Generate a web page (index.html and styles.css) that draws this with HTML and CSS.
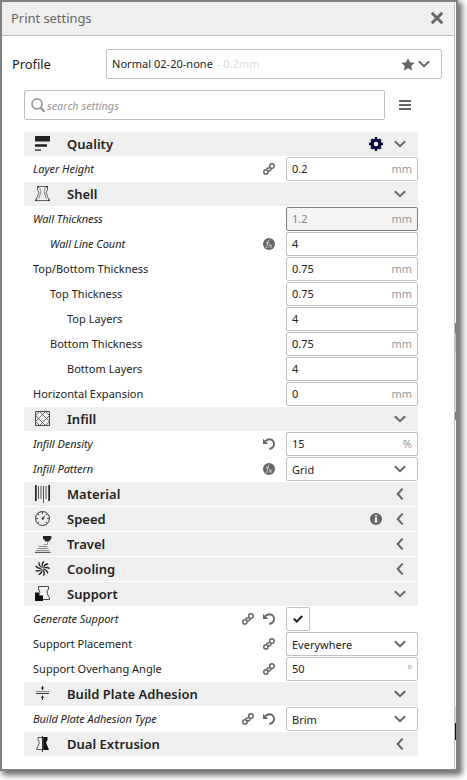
FILE: index.html
```html
<!DOCTYPE html>
<html lang="en">
<head>
<meta charset="utf-8">
<title>Print settings</title>
<link rel="stylesheet" href="styles.css">
</head>
<body>
<svg class="defs" aria-hidden="true">
  <symbol id="down" viewBox="0 0 12 8"><path d="M.8 1.200 6 6.200 11.200 1.200" fill="none" stroke="#666" stroke-width="2"/></symbol>
  <symbol id="left" viewBox="0 0 8 12"><path d="M6.600 .600 1.700 6 6.600 11.400" fill="none" stroke="#666" stroke-width="2"/></symbol>
  <symbol id="link" viewBox="0 0 12 12"><g fill="none" stroke="#666" stroke-width="1.500"><circle cx="2.900" cy="8.900" r="2.100"/><circle cx="8.900" cy="3.100" r="2.300"/><path d="M3.700 6.400C4 4.900 5.300 4.600 6.700 5.300M5.200 7.400C6.500 8.600 8.200 7.600 8 5.600"/></g></symbol>
  <symbol id="undo" viewBox="0 0 12 12"><path d="M2.600 3.200C4.600 .700 8.700 .400 10.400 3.400 12 6.600 10.300 10.600 6.300 11" fill="none" stroke="#666" stroke-width="1.900"/><path d="M0 .800V6H5.200Z" fill="#666"/></symbol>
  <symbol id="fx" viewBox="0 0 12 12"><circle cx="6" cy="6" r="6" fill="#666"/><path d="M6.600 2.200C5.300 1.800 4.900 3 4.700 4.300L4 8.500C3.800 9.700 3.300 10 2.500 9.700M3 4.700H6.200M6.300 6.200 8.700 9.700M9.200 6.200 5.900 9.700" fill="none" stroke="#ddd" stroke-width=".9"/></symbol>
</svg>

<main class="window">
  <header class="titlebar">
    <h1>Print settings</h1>
    <svg class="close" viewBox="0 0 12 12"><path d="M1.700 1.700 10.300 10.300M10.300 1.700 1.700 10.300" stroke="#666" stroke-width="3" stroke-linecap="round"/></svg>
  </header>

  <div class="profile">
    <span class="profile-label">Profile</span>
    <div class="profile-box">
      <span class="profile-name">Normal 02-20-none</span><span class="profile-detail">- 0.2mm</span>
      <svg class="star" viewBox="0 0 14 13"><path d="M7 0 9 4.300 13.600 4.800 10.200 8 11.200 12.700 7 10.300 2.800 12.700 3.800 8 .4 4.800 5 4.300Z" fill="#666"/></svg>
      <svg class="down"><use href="#down"/></svg>
    </div>
  </div>

  <div class="search-row">
    <div class="search">
      <svg viewBox="0 0 15 15"><circle cx="6" cy="5.900" r="5" fill="none" stroke="#999" stroke-width="1.800"/><path d="M9.600 9.600 13.600 13.600" stroke="#999" stroke-width="2.200"/></svg>
      <span>search settings</span>
    </div>
    <svg class="menu" viewBox="0 0 12 10"><path d="M0 1H12M0 5H12M0 9H12" stroke="#666" stroke-width="2"/></svg>
  </div>

  <div class="settings">
    <div class="category">
      <svg class="cat-icon" viewBox="0 0 16 16"><path d="M0 0H15V5.600H0ZM0 8.300H12V10.700H0ZM0 13.500H6V14.800H0Z" fill="#222"/></svg>
      <h2>Quality</h2>
      <svg class="badge gear" viewBox="0 0 14 14"><path d="M5.800 0H8.200V2H5.800ZM5.800 12H8.200V14H5.800ZM0 5.800H2V8.200H0ZM12 5.800H14V8.200H12ZM1.400 3.100 3.100 1.400 4.600 2.900 2.900 4.600ZM9.400 2.900 10.900 1.400 12.600 3.100 11.100 4.600ZM1.400 10.900 2.900 9.400 4.600 11.100 3.100 12.600ZM9.400 11.100 11.100 9.400 12.600 10.900 10.900 12.600Z" fill="#08083f"/><circle cx="7" cy="7" r="3.900" fill="none" stroke="#08083f" stroke-width="3.200"/></svg>
      <svg class="down"><use href="#down"/></svg>
    </div>
    <div class="setting">
      <span class="label changed">Layer Height</span>
      <svg class="mark"><use href="#link"/></svg>
      <div class="field"><span>0.2</span><span class="unit">mm</span></div>
    </div>

    <div class="category">
      <svg class="cat-icon" viewBox="0 0 16 16"><g fill="none" stroke="#444" stroke-width=".8"><path d="M2.500.5H12.500M.5 14.500H14.500M2.500 1V4L4 6.500 1 14M12.500 1V4L11 6.500 14 14"/><path d="M5 1.500V3.500L6 6 3.500 13M10 1.500V3.500L9 6 11.500 13" stroke-width=".6"/></g><path d="M2 0H4V1.500H2ZM11 0H13V1.500H11ZM0 13.500H2V15H0ZM13 13.500H15V15H13Z" fill="#333"/></svg>
      <h2>Shell</h2>
      <svg class="down"><use href="#down"/></svg>
    </div>
    <div class="setting">
      <span class="label changed">Wall Thickness</span>
      <div class="field disabled"><span>1.2</span><span class="unit">mm</span></div>
    </div>
    <div class="setting">
      <span class="label changed level-1">Wall Line Count</span>
      <svg class="mark"><use href="#fx"/></svg>
      <div class="field"><span>4</span></div>
    </div>
    <div class="setting">
      <span class="label">Top/Bottom Thickness</span>
      <div class="field"><span>0.75</span><span class="unit">mm</span></div>
    </div>
    <div class="setting">
      <span class="label level-1">Top Thickness</span>
      <div class="field"><span>0.75</span><span class="unit">mm</span></div>
    </div>
    <div class="setting">
      <span class="label level-2">Top Layers</span>
      <div class="field"><span>4</span></div>
    </div>
    <div class="setting">
      <span class="label level-1">Bottom Thickness</span>
      <div class="field"><span>0.75</span><span class="unit">mm</span></div>
    </div>
    <div class="setting">
      <span class="label level-2">Bottom Layers</span>
      <div class="field"><span>4</span></div>
    </div>
    <div class="setting">
      <span class="label">Horizontal Expansion</span>
      <div class="field"><span>0</span><span class="unit">mm</span></div>
    </div>

    <div class="category">
      <svg class="cat-icon" viewBox="0 0 16 16"><path d="M.5.500H14.500V14.500H.5Z" fill="none" stroke="#333" stroke-width=".9"/><path d="M.5 4.500 4.500.500M.5 10.500 10.500.500M4.500 14.500 14.500 4.500M10.500 14.500 14.500 10.500M4.500.500 14.500 10.500M10.500.500 14.500 4.500M.5 4.500 10.500 14.500M.5 10.500 4.500 14.500" fill="none" stroke="#444" stroke-width=".75"/></svg>
      <h2>Infill</h2>
      <svg class="down"><use href="#down"/></svg>
    </div>
    <div class="setting">
      <span class="label changed">Infill Density</span>
      <svg class="mark"><use href="#undo"/></svg>
      <div class="field"><span>15</span><span class="unit">%</span></div>
    </div>
    <div class="setting">
      <span class="label changed">Infill Pattern</span>
      <svg class="mark"><use href="#fx"/></svg>
      <div class="field select"><span>Grid</span><svg class="down"><use href="#down"/></svg></div>
    </div>

    <div class="category">
      <svg class="cat-icon tall" viewBox="0 0 16 18"><path d="M0 0H1.700V16H0ZM13.300 0H15V16H13.300Z" fill="#222"/><path d="M3.500 1V14M6 1V14M8.500 1V18M11 1V14" stroke="#555" stroke-width="1"/></svg>
      <h2>Material</h2>
      <svg class="left"><use href="#left"/></svg>
    </div>
    <div class="category">
      <svg class="cat-icon" viewBox="0 0 16 16"><circle cx="7.500" cy="7.500" r="7" fill="none" stroke="#333" stroke-width="1"/><path d="M7.500 1V3M2.900 2.900 4.200 4.200M1 7.500H3M12 7.500H14M2.900 12.100 4.200 10.800M12.100 12.100 10.800 10.800M12.100 2.900 10.800 4.200" stroke="#333" stroke-width=".9"/><path d="M6.300 7.400 10.200 4.200 8.100 8.900Z" fill="#222"/></svg>
      <h2>Speed</h2>
      <svg class="badge info" viewBox="0 0 12 12"><circle cx="6" cy="6" r="6" fill="#666"/><path d="M5 2H7V3.500H5ZM4.700 4.500H7V8.500H7.500V9.500H4.500V8.500H5V5.300H4.700Z" fill="#efefef"/></svg>
      <svg class="left"><use href="#left"/></svg>
    </div>
    <div class="category">
      <svg class="cat-icon travel" viewBox="0 0 17 17"><path d="M8 0H16.300V2.500L14 5.500H10.500L8 2.500Z" fill="#222"/><path d="M12.500 5.500V8.500H8.500" fill="none" stroke="#999"/><path d="M4 10.500H12.500M2.500 12.500H13.500M1 14.500H14.500" stroke="#888"/><path d="M0 16.400H15.500" stroke="#444" stroke-width="1"/></svg>
      <h2>Travel</h2>
      <svg class="left"><use href="#left"/></svg>
    </div>
    <div class="category">
      <svg class="cat-icon" viewBox="0 0 16 16"><g fill="#222"><path id="blade" d="M7.300 6.800C5.900 4.300 6.400 1.800 8.300 .100L9.500 .600C8 2.300 7.500 4.300 7.700 6.800Z"/><use href="#blade" transform="rotate(40 7.500 7.500)"/><use href="#blade" transform="rotate(80 7.500 7.500)"/><use href="#blade" transform="rotate(120 7.500 7.500)"/><use href="#blade" transform="rotate(160 7.500 7.500)"/><use href="#blade" transform="rotate(200 7.500 7.500)"/><use href="#blade" transform="rotate(240 7.500 7.500)"/><use href="#blade" transform="rotate(280 7.500 7.500)"/><use href="#blade" transform="rotate(320 7.500 7.500)"/></g></svg>
      <h2>Cooling</h2>
      <svg class="left"><use href="#left"/></svg>
    </div>
    <div class="category">
      <svg class="cat-icon" viewBox="0 0 16 16"><path d="M3.500.5H13.500V3C11.500 5.500 12 8 14.500 12V13.500H8M3.500.5V3L5 6.500" fill="none" stroke="#333" stroke-width=".9"/><path d="M0 6.500H4.500V9.500H8V15H0Z" fill="#111"/></svg>
      <h2>Support</h2>
      <svg class="down"><use href="#down"/></svg>
    </div>
    <div class="setting">
      <span class="label changed">Generate Support</span>
      <svg class="mark"><use href="#link"/></svg>
      <svg class="mark"><use href="#undo"/></svg>
      <div class="check-cell"><div class="checkbox"><svg viewBox="0 0 10 8"><path d="M.8 3.800 3.800 6.600 9.200 1" fill="none" stroke="#222" stroke-width="2"/></svg></div></div>
    </div>
    <div class="setting">
      <span class="label">Support Placement</span>
      <svg class="mark"><use href="#link"/></svg>
      <div class="field select"><span>Everywhere</span><svg class="down"><use href="#down"/></svg></div>
    </div>
    <div class="setting">
      <span class="label">Support Overhang Angle</span>
      <svg class="mark"><use href="#link"/></svg>
      <div class="field"><span>50</span><span class="unit">°</span></div>
    </div>

    <div class="category">
      <svg class="cat-icon" viewBox="0 0 16 16"><path d="M1 5.500H14" stroke="#888"/><path d="M1 7.500H14" stroke="#333"/><path d="M7.500 0V4M7.500 10V14" stroke="#222"/><path d="M6 1.500H9L7.500 4.500ZM6 12H9L7.500 9Z" fill="#222"/></svg>
      <h2>Build Plate Adhesion</h2>
      <svg class="down"><use href="#down"/></svg>
    </div>
    <div class="setting">
      <span class="label changed">Build Plate Adhesion Type</span>
      <svg class="mark"><use href="#link"/></svg>
      <svg class="mark"><use href="#undo"/></svg>
      <div class="field select"><span>Brim</span><svg class="down"><use href="#down"/></svg></div>
    </div>
    <div class="category">
      <svg class="cat-icon" viewBox="0 0 16 16"><path d="M7.500 1.500H3V4L4.500 6.500 1.500 13.500H7.500" fill="none" stroke="#444" stroke-width=".9"/><path d="M8.200 1H12.500V4L11 6.500 14 14H8.200Z" fill="#111"/><path d="M7.500 0V16" stroke="#111" stroke-width=".9"/></svg>
      <h2>Dual Extrusion</h2>
      <svg class="left"><use href="#left"/></svg>
    </div>
  </div>
  <div class="edge"></div>
</main>
</body>
</html>
```
FILE: styles.css
```css
* { box-sizing: border-box; }

body {
  margin: 0;
  height: 780px;
  background: #fff;
  overflow: hidden;
  color: #222;
  font: 11px/16px "Noto Sans", sans-serif;
}

svg { display: block; flex: none; }
.defs { position: absolute; width: 0; height: 0; }
h1, h2 { margin: 0; }

.window {
  position: relative;
  width: 458px;
  height: 771px;
  border: 2px solid #808080;
  background: #fff;
  box-shadow: 3px 3px 6px 1px rgba(0, 0, 0, .6);
}

.edge {
  position: absolute;
  top: 0;
  right: 0;
  width: 2px;
  height: 100%;
  border-left: 1px solid #c0c0c0;
  background: linear-gradient(transparent 321px, #4a80d8 321px 331px, #bbb 331px 350px, #ddd 350px 410px, #4a80d8 410px 418px, transparent 418px 704px, #ddd 704px 721px, #08083f 721px 738px, transparent 738px);
}

.titlebar {
  display: flex;
  justify-content: space-between;
  align-items: center;
  width: 452px;
  height: 34px;
  padding: 0 11px 2px 9px;
  border-bottom: 1px solid #bfbfbf;
  background: #efefef;
}
.titlebar h1 { font-size: 13px; font-weight: 400; letter-spacing: -.05px; color: #666; }
.close { width: 12px; height: 12px; }

.profile { display: flex; align-items: center; margin: 13px 0 0 10px; }
.profile-label { width: 94px; font-size: 13px; letter-spacing: -.1px; }
.profile-box {
  display: flex;
  align-items: center;
  width: 336px;
  height: 30px;
  padding: 0 11px 0 5px;
  border: 1px solid #bfbfbf;
  border-radius: 2px;
}
.profile-name { letter-spacing: .03px; }
.profile-detail { margin-left: 4px; color: #ddd; }
.star { width: 14px; height: 13px; margin: 0 3px 0 auto; }

.search-row { display: flex; align-items: center; margin: 11px 0 0 22px; }
.search {
  display: flex;
  align-items: center;
  gap: 1px;
  width: 361px;
  height: 30px;
  padding-left: 6px;
  border: 1px solid #bfbfbf;
  border-radius: 2px;
  color: #999;
  font-style: italic;
  letter-spacing: -.06px;
}
.search span { padding-top: 1px; }
.search svg { width: 15px; height: 15px; }
.menu { width: 12px; height: 10px; margin-left: 14px; }

.settings { display: grid; grid-auto-rows: 24px; row-gap: 1px; width: 394px; margin: 12px 0 0 22px; }

.category { display: flex; align-items: center; padding: 0 12px 0 11px; background: #efefef; }
.category h2 { flex: 1; font-size: 13px; font-weight: 600; letter-spacing: .02px; }
.cat-icon { width: 16px; height: 16px; margin-right: 16px; }
.cat-icon.tall { height: 18px; }
.cat-icon.travel { width: 17px; height: 17px; margin-right: 15px; }

.down { width: 12px; height: 8px; }
.left { width: 8px; height: 12px; margin-right: 2px; }
.gear { width: 14px; height: 14px; margin-right: 11px; }
.info { width: 12px; height: 12px; margin-right: 14px; }

.setting { display: flex; align-items: center; gap: 9px; padding-left: 9px; }
.label { flex: 1; white-space: nowrap; letter-spacing: .02px; }
.label.changed { font-style: italic; letter-spacing: -.05px; }
.level-1 { padding-left: 17px; }
.level-2 { padding-left: 34px; }
.mark { width: 12px; height: 12px; }
.mark + .field, .mark + .check-cell { margin-left: 2px; }

.field {
  display: flex;
  align-items: center;
  justify-content: space-between;
  width: 132px;
  height: 24px;
  padding: 0 5px;
  border: 1px solid #bfbfbf;
  border-radius: 2px;
  background: #fff;
}
.field.disabled { border-color: #808080; background: #f4f4f4; color: #808080; }
.unit { color: #999; }
.field.select { padding-right: 11px; }
.field.select span { padding-top: 2px; }

.check-cell { width: 132px; }
.checkbox {
  display: grid;
  place-items: center;
  width: 24px;
  height: 24px;
  border: 1px solid #bfbfbf;
  border-radius: 2px;
}
.checkbox svg { width: 10px; height: 8px; }
```
